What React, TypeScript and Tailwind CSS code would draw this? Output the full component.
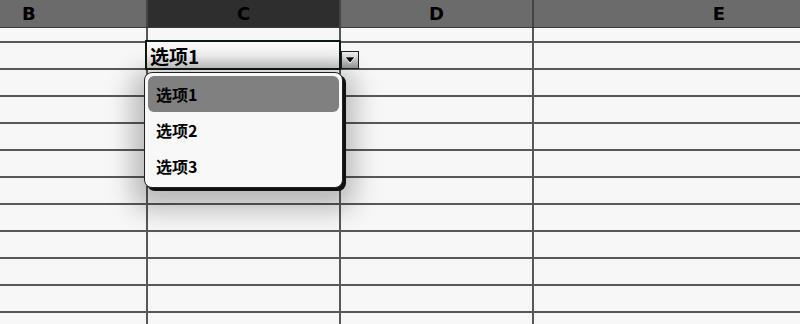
import * as React from 'react';

const columns = [
  { key: 'B', width: 'w-[148px]', label: 'pl-[22px] justify-start' },
  { key: 'C', width: 'w-[193px]', label: 'justify-center' },
  { key: 'D', width: 'w-[193px]', label: 'justify-center' },
  { key: 'E', width: 'w-[372px]', label: 'justify-center' },
];

const options = ['选项1', '选项2', '选项3'];

function ArrowButton() {
  return (
    <div className="flex h-[18px] w-[18px] items-center justify-center border border-[#1b1f24] bg-gradient-to-b from-[#f2f2f2] to-[#9a9a9a]">
      <svg width="12" height="8" viewBox="0 0 12 8">
        <path d="M0.8 0.8 L11.2 0.8 L6 7.2 Z" fill="#000" stroke="#fff" strokeWidth="1" />
      </svg>
    </div>
  );
}

export default function App() {
  const [selected] = React.useState(0);
  const rows = Array.from({ length: 12 });

  return (
    <div className="relative h-[324px] w-[800px] overflow-hidden bg-[#f7f7f7] font-['DejaVu_Sans',sans-serif]">
      {/* column headers */}
      <div className="flex h-[28px] w-[906px] border-b border-[#3a3a3a]">
        {columns.map((c) => (
          <div
            key={c.key}
            className={`${c.width} ${c.label} flex shrink-0 items-center border-r-2 border-[#444] text-[18px] font-bold text-black ${
              c.key === 'C' ? 'bg-[#2e2e2e]' : 'bg-[#6b6b6b]'
            }`}
          >
            {c.key}
          </div>
        ))}
      </div>

      {/* cells */}
      {rows.map((_, i) => (
        <div key={i} className={`flex w-[906px] border-b-2 border-[#585858] ${i === 0 ? 'h-[15px]' : 'h-[27px]'}`}>
          {columns.map((c) => (
            <div key={c.key} className={`${c.width} shrink-0 border-r-2 border-[#585858]`} />
          ))}
        </div>
      ))}

      {/* active cell editor */}
      <div className="absolute left-[145px] top-[40px] flex items-end">
        <div className="flex h-[30px] w-[196px] items-center border-2 border-[#0b1a12] bg-gradient-to-b from-[#fbfbfb] via-[#f2f2f2] to-[#cfcfcf] pl-[3px] font-['Noto_Sans_CJK_SC',sans-serif] text-[19px] font-semibold leading-none text-black">
          {options[selected]}
        </div>
        <div className="mb-[1px]">
          <ArrowButton />
        </div>
      </div>

      {/* dropdown list */}
      <div className="absolute left-[144px] top-[72px] flex h-[116px] w-[199px] flex-col rounded-[8px] border border-[#222] bg-[#f8f8f8] p-[3px] shadow-[3px_3px_0_#111,0_10px_26px_12px_rgba(0,0,0,0.25)]">
        {options.map((o, i) => (
          <div
            key={o}
            className={`flex h-[36px] items-center rounded-[6px] pl-[8px] font-['Noto_Sans_CJK_SC',sans-serif] text-[16px] font-bold text-black ${
              i === selected ? 'bg-[#808080]' : ''
            }`}
          >
            {o}
          </div>
        ))}
      </div>
    </div>
  );
}
